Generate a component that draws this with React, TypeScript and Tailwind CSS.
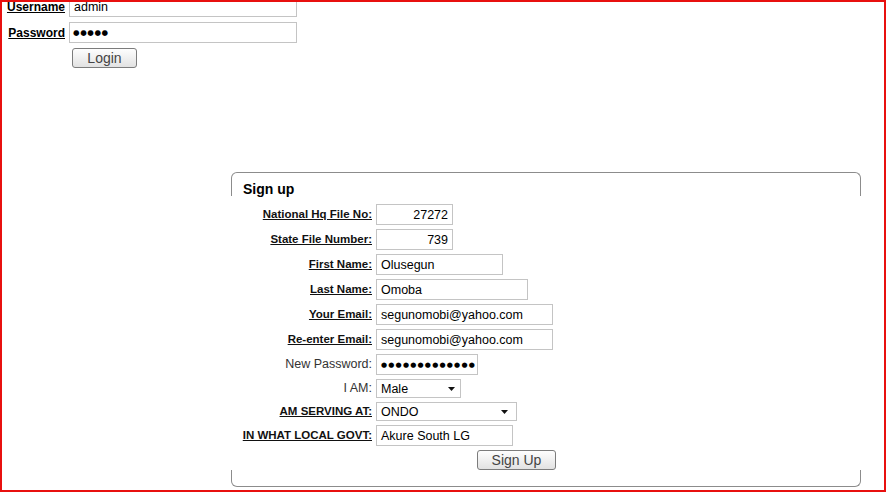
import React from "react";

const font = { fontFamily: '"Liberation Sans", Arial, sans-serif' };
const dots = { fontFamily: '"DejaVu Sans", sans-serif' };

type Row = {
  label: string;
  strong?: boolean;
  value: string;
  width: string;
  kind?: "text" | "num" | "pass" | "select";
  arrow?: string;
};

const rows: Row[] = [
  { label: "National Hq File No:", strong: true, value: "27272", width: "w-[77px]", kind: "num" },
  { label: "State File Number:", strong: true, value: "739", width: "w-[77px]", kind: "num" },
  { label: "First Name:", strong: true, value: "Olusegun", width: "w-[127px]" },
  { label: "Last Name:", strong: true, value: "Omoba", width: "w-[152px]" },
  { label: "Your Email:", strong: true, value: "segunomobi@yahoo.com", width: "w-[177px]" },
  { label: "Re-enter Email:", strong: true, value: "segunomobi@yahoo.com", width: "w-[177px]" },
  { label: "New Password:", value: "●●●●●●●●●●●●●", width: "w-[102px]", kind: "pass" },
  { label: "I AM:", value: "Male", width: "w-[85px]", kind: "select", arrow: "pr-[5px]" },
  { label: "AM SERVING AT:", strong: true, value: "ONDO", width: "w-[141px]", kind: "select", arrow: "pr-[8px]" },
  { label: "IN WHAT LOCAL GOVT:", strong: true, value: "Akure South LG", width: "w-[137px]" },
];

const Arrow = () => (
  <svg width="7" height="4" viewBox="0 0 7 4">
    <path d="M0 0h7L3.5 4z" fill="#111" />
  </svg>
);

const Field = ({ row }: { row: Row }) => {
  if (row.kind === "select") {
    return (
      <div
        className={`${row.width} h-[19px] border border-[#c4c4c4] bg-white flex items-center justify-between pl-[4px] pt-[1px] ${row.arrow} text-[12.5px] text-black`}
      >
        <span>{row.value}</span>
        <Arrow />
      </div>
    );
  }
  if (row.kind === "pass") {
    return (
      <div
        className={`${row.width} h-[21px] border border-[#c4c4c4] bg-white flex items-center pl-[4px] pt-[1px] text-[7px] tracking-[1.2px] text-black overflow-hidden whitespace-nowrap`}
        style={dots}
      >
        {row.value}
      </div>
    );
  }
  return (
    <div
      className={`${row.width} h-[21px] border border-[#c4c4c4] bg-white flex items-center pt-[1px] text-[12.5px] text-black whitespace-nowrap ${
        row.kind === "num" ? "justify-end pr-[4px]" : "pl-[4px]"
      }`}
    >
      {row.value}
    </div>
  );
};

const Button = ({ label, className }: { label: string; className: string }) => (
  <div
    className={`${className} h-[20px] rounded-[3px] border border-[#7c7c7c] bg-gradient-to-b from-[#fefefe] to-[#e2e2e2] flex items-center justify-center text-[14px] text-[#444]`}
  >
    {label}
  </div>
);

export default function App() {
  return (
    <div
      className="w-[886px] h-[492px] border-2 border-[#e8100f] bg-white overflow-hidden text-black"
      style={font}
    >
      {/* login */}
      <div className="-mt-[6px] grid grid-cols-[63px_228px] gap-x-[4px] gap-y-[5px] items-center">
        <span className="text-right text-[12px] font-bold underline">Username</span>
        <div className="h-[21px] border border-[#c4c4c4] flex items-center pl-[4px] pt-[1px] text-[12.5px]">admin</div>
        <span className="text-right text-[12px] font-bold underline">Password</span>
        <div
          className="h-[21px] border border-[#c4c4c4] flex items-center pl-[3px] pt-[1px] text-[7.5px] tracking-[0.6px]"
          style={dots}
        >
          ●●●●●
        </div>
        <span />
        <Button label="Login" className="w-[65px] ml-[3px]" />
      </div>

      {/* sign up */}
      <div className="mt-[104px] ml-[229px] w-[630px]">
        <div className="h-[24px] border-t border-x border-[#8c8c8c] rounded-t-[6px] pl-[11px] pt-[8px]">
          <div className="text-[14px] leading-[16px] font-bold">Sign up</div>
        </div>
        <div className="mt-[8px] grid grid-cols-[141px_1fr] gap-x-[4px] gap-y-[4px] items-center">
          {rows.map((r) => (
            <React.Fragment key={r.label}>
              <span
                className={`text-right ${
                  r.strong ? "text-[11.5px] font-bold underline text-[#111]" : "text-[12.5px] text-[#333]"
                }`}
              >
                {r.label}
              </span>
              <Field row={r} />
            </React.Fragment>
          ))}
          <span />
          <Button label="Sign Up" className="w-[79px] ml-[101px]" />
        </div>
        <div className="h-[17px] border-b border-x border-[#8c8c8c] rounded-b-[6px]" />
      </div>
    </div>
  );
}
